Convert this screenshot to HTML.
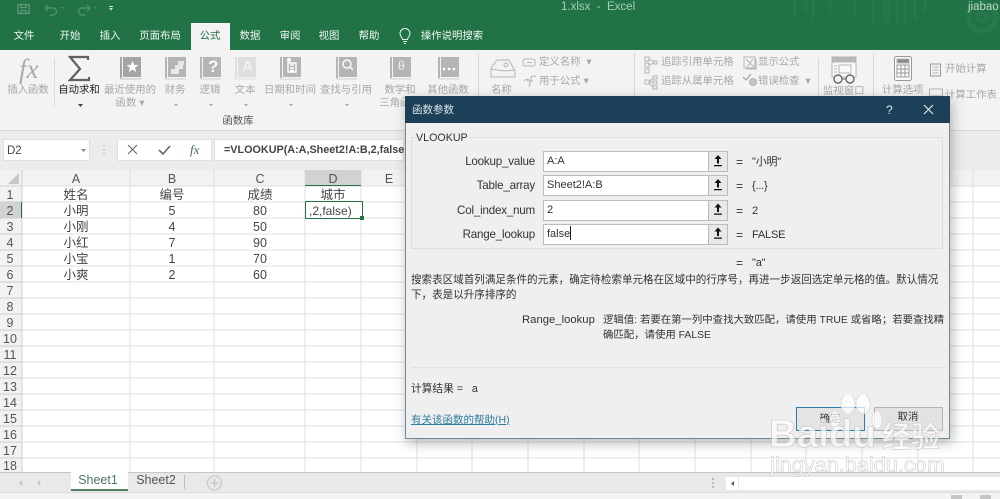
<!DOCTYPE html>
<html><head><meta charset="utf-8"><style>
html,body{margin:0;padding:0;width:1000px;height:499px;overflow:hidden;background:#fff}
#r{position:relative;width:1000px;height:499px;overflow:hidden;font-family:"Liberation Sans","Noto Sans CJK SC",sans-serif;font-size:10.4px;color:#333;filter:blur(.3px)}
#r div{position:absolute}
.t{white-space:nowrap;line-height:14px}
.c{transform:translateX(-50%)}
.w{color:#f0f5f2}
.g{color:#a8a8a8}
.cell{font-size:12.5px;color:#444;line-height:16px;transform:translateX(-50%);white-space:nowrap}
.rn{left:0;width:20px;text-align:center;font-size:12.5px;line-height:16px;color:#555}
.lb{right:465px;font-size:11.6px;letter-spacing:-.2px;color:#333;white-space:nowrap;line-height:16px}
.inp{left:543px;height:19px;background:#fff;border:1px solid #bcbcbc;font-size:11px;line-height:19px;padding-left:3px;width:161px;color:#333}
.btn{left:708px;width:18px;height:19px;background:#e9e9e9;border:1px solid #bcbcbc}
.val{left:752px;font-size:11px;letter-spacing:-.2px;line-height:16px;white-space:nowrap;color:#333}
.eq{left:736px;font-size:12px;line-height:16px;color:#333}
.d{font-size:10.4px;line-height:15px;white-space:nowrap;color:#333}
</style></head><body><div id="r">

<!-- green title -->
<div style="left:0;top:0;width:1000px;height:50px;background:#217346"></div>
<svg style="position:absolute;left:0;top:0" width="1000" height="50" fill="none">
<g stroke="#5f9a79" stroke-width="1.3"><rect x="18" y="4.500" width="11" height="9"/><path d="M21 13.500v-3h5v3M21 4.500v3h5v-3"/></g>
<g stroke="#4f8f6b" stroke-width="1.400"><path d="M45 8h8a3.500 3.500 0 0 1 0 7h-3M45 8l3-3M45 8l3 3"/><path d="M90 8h-8a3.500 3.500 0 0 0 0 7h3M90 8l-3-3M90 8l-3 3"/></g>
<path d="M61 7h3l-1.500 2zM94 7h3l-1.500 2z" fill="#4f8f6b"/>
<path d="M109 6h4v1h-4zM109 8h4l-2 2.500z" fill="#cfe0d6"/>
<g stroke="#2b7a4e" stroke-width="3" opacity=".55"><path d="M795 0v18M806 0v12M813 0v21M830 0v14M855 0v18M873 0v25M884 0v20M888 0v26M897 0v22M905 0v25M915 0v20M925 0v12"/></g>
<circle cx="982" cy="17" r="14" stroke="#2b7a4e" stroke-width="5" opacity=".7"/><circle cx="982" cy="17" r="4" stroke="#2b7a4e" stroke-width="3" opacity=".7"/>
</svg>
<div class="t" style="left:561px;top:0;color:#a9cdb8;font-size:11.5px">1.xlsx&nbsp; -&nbsp; Excel</div>
<div class="t" style="left:968px;top:0;color:#bcd8c8;font-size:11.5px">jiabao</div>

<!-- tabs -->
<div style="left:191px;top:23px;width:39px;height:27px;background:#f3f3f3"></div>
<div class="t c w" style="left:24px;top:30px">文件</div>
<div class="t c w" style="left:70px;top:30px">开始</div>
<div class="t c w" style="left:110px;top:30px">插入</div>
<div class="t c w" style="left:160px;top:30px">页面布局</div>
<div class="t c" style="left:210px;top:30px;color:#217346">公式</div>
<div class="t c w" style="left:250px;top:30px">数据</div>
<div class="t c w" style="left:290px;top:30px">审阅</div>
<div class="t c w" style="left:329px;top:30px">视图</div>
<div class="t c w" style="left:369px;top:30px">帮助</div>
<div class="t c w" style="left:452px;top:30px">操作说明搜索</div>
<svg style="position:absolute;left:398px;top:28px" width="14" height="17" fill="none" stroke="#e8f1ec" stroke-width="1"><path d="M4.500 11.500C4.500 9.500 2 8.500 2 5.500a5 5 0 0 1 10 0c0 3-2.500 4-2.500 6zM5 13.500h4M6 15.500h2"/></svg>

<!-- ribbon -->
<div style="left:0;top:50px;width:1000px;height:81px;background:#f3f3f3"></div>
<div style="left:0;top:130px;width:1000px;height:40px;background:#ececec;border-top:1px solid #d6d6d6"></div>
<div style="left:54px;top:58px;width:1px;height:50px;background:#dcdcdc"></div>
<div style="left:478px;top:53px;width:1px;height:45px;background:#d8d8d8"></div>
<div style="left:634px;top:53px;width:1px;height:45px;background:#d8d8d8"></div>
<div style="left:818px;top:58px;width:1px;height:40px;background:#d8d8d8"></div>
<div style="left:873px;top:53px;width:1px;height:45px;background:#d8d8d8"></div>

<div style="left:19px;top:49px;font:italic 27px/40px 'Liberation Serif',serif;color:#ababab">fx</div>
<svg style="position:absolute;left:0;top:50px" width="1000" height="50" fill="none">
<path d="M88 10V7H70l10 12-10 11h19v-3" stroke="#606060" stroke-width="2.200"/>
<path d="M120 7h2v21h-2zM123 7h18v20h-18z" fill="#a5a5a5"/><path d="M120 29h21" stroke="#c2c2c2"/>
<path d="M165 7h2v21h-2zM168 7h18v20h-18z" fill="#b5b5b5"/><path d="M165 29h21" stroke="#d0d0d0"/>
<path d="M200 7h2v21h-2zM203 7h18v20h-18z" fill="#b5b5b5"/><path d="M200 29h21" stroke="#d0d0d0"/>
<path d="M235 7h2v21h-2zM238 7h18v20h-18z" fill="#dedede"/><path d="M235 29h21" stroke="#e0e0e0"/>
<path d="M280 7h2v21h-2zM283 7h18v20h-18z" fill="#b5b5b5"/><path d="M280 29h21" stroke="#d0d0d0"/>
<path d="M336 7h2v21h-2zM339 7h18v20h-18z" fill="#b5b5b5"/><path d="M336 29h21" stroke="#d0d0d0"/>
<path d="M390 7h2v21h-2zM393 7h18v20h-18z" fill="#b5b5b5"/><path d="M390 29h21" stroke="#d0d0d0"/>
<path d="M438 7h2v21h-2zM441 7h18v20h-18z" fill="#b5b5b5"/><path d="M438 29h21" stroke="#d0d0d0"/>
<path d="M132.500 11l1.800 4h4.200l-3.400 2.800 1.200 4.300-3.800-2.500-3.800 2.500 1.200-4.300-3.400-2.800h4.200z" fill="#fff"/>
<path d="M171 19h8v5h-8zM175 15h8v4h-8zM178 11h6v4h-6z" fill="#e8e8e8"/>
<path d="M296 22v-9h-8v9zM290 15h4M290 18h4M290 20.500h4" stroke="#fff" stroke-width="1.400"/><circle cx="289" cy="10" r="2" fill="#fff"/>
<circle cx="347" cy="14" r="4" stroke="#fff" stroke-width="1.400"/><path d="M350 17l3 3" stroke="#fff" stroke-width="1.500"/>
<circle cx="444" cy="19" r="1.300" fill="#fff"/><circle cx="449" cy="19" r="1.300" fill="#fff"/><circle cx="454" cy="19" r="1.300" fill="#fff"/>
</svg>
<div class="t" style="left:208px;top:54px;font:bold 17px/26px 'Liberation Sans',sans-serif;color:#fff;opacity:.95">?</div>
<div class="t" style="left:242px;top:54px;font:bold 15px/26px 'Liberation Sans',sans-serif;color:#f2f2f2">A</div>
<div class="t" style="left:398px;top:55px;font:14px/24px 'Liberation Serif',serif;color:#f0f0f0">θ</div>

<div class="t c g" style="left:28px;top:84px">插入函数</div>
<div class="t c" style="left:79px;top:84px;color:#222">自动求和</div>
<div class="t c g" style="left:130px;top:84px">最近使用的</div>
<div class="t c g" style="left:130px;top:97px">函数 ▾</div>
<div class="t c g" style="left:175px;top:84px">财务</div>
<div class="t c g" style="left:210px;top:84px">逻辑</div>
<div class="t c g" style="left:245px;top:84px">文本</div>
<div class="t c g" style="left:290px;top:84px">日期和时间</div>
<div class="t c g" style="left:346px;top:84px">查找与引用</div>
<div class="t c g" style="left:400px;top:84px">数学和</div>
<div class="t c g" style="left:400px;top:97px">三角函数</div>
<div class="t c g" style="left:448px;top:84px">其他函数</div>
<svg style="position:absolute;left:0;top:100px" width="400" height="10"><path d="M78 4h5l-2.500 3z" fill="#444"/><path d="M174 4h4l-2 2.500zM209 4h4l-2 2.500zM244 4h4l-2 2.500zM289 4h4l-2 2.500zM345 4h4l-2 2.500z" fill="#aaa"/></svg>
<div class="t c" style="left:238px;top:115px;color:#555">函数库</div>

<div class="t g" style="left:491px;top:84px">名称</div>
<div class="t g" style="left:539px;top:56px">定义名称 &nbsp;▾</div>
<div class="t g" style="left:539px;top:75px">用于公式 ▾</div>
<div class="t g" style="left:661px;top:56px">追踪引用单元格</div>
<div class="t g" style="left:661px;top:75px">追踪从属单元格</div>
<div class="t g" style="left:758px;top:56px">显示公式</div>
<div class="t g" style="left:758px;top:75px">错误检查 &nbsp;▾</div>
<div class="t g" style="left:823px;top:85px">监视窗口</div>
<div class="t g" style="left:882px;top:84px">计算选项</div>
<div class="t g" style="left:945px;top:63px">开始计算</div>
<div class="t g" style="left:945px;top:89px">计算工作表</div>
<svg style="position:absolute;left:0;top:50px" width="1000" height="46" fill="none" stroke="#b4b4b4">
<path d="M497 10l-6 8v9h24v-6l-6-11z"/><path d="M491 19l14 2 10-1"/><circle cx="506" cy="15" r="2"/>
<rect x="523" y="9" width="12" height="7" rx="2"/><path d="M527 12.500h5"/>
<path d="M524 31c2-2 3-2 5-1M536 27c-3-2-5-1-5 2l-2 8M527 31h6"/>
<rect x="645" y="7" width="4" height="4"/><rect x="645" y="13" width="4" height="4"/><rect x="645" y="19" width="4" height="4"/><rect x="654" y="11" width="3" height="3"/><path d="M649 9l5 3M649 15l5-2"/>
<rect x="645" y="30" width="4" height="4"/><rect x="653" y="26" width="4" height="3"/><rect x="653" y="31" width="4" height="3"/><rect x="653" y="36" width="4" height="3"/><path d="M649 32l4-4M649 32h4M649 33l4 4"/>
<rect x="744" y="7" width="11" height="11"/><path d="M746 9l8 8M753 9l-6 8M746 19h10v-10"/>
<path d="M743 27l3 3 5-6" stroke="#999"/><circle cx="753" cy="32" r="3.500" fill="#c5c5c5"/>
<rect x="832" y="7" width="24" height="20" fill="#fafafa"/><rect x="832" y="7" width="24" height="5" fill="#b8b8b8"/><rect x="839" y="15" width="12" height="8"/><path d="M834 16h3M834 19h3M834 22h3"/>
<circle cx="838" cy="29" r="4" stroke="#666" stroke-width="1.400" fill="#f3f3f3"/><circle cx="850" cy="29" r="4" stroke="#666" stroke-width="1.400" fill="#f3f3f3"/><path d="M842 29h4" stroke="#666"/>
<rect x="894.500" y="6.500" width="17" height="24" rx="2" fill="#fafafa" stroke="#999"/><rect x="897" y="9" width="12" height="4" fill="#888"/><path d="M897 15h12v12h-12zM901 15v12M905 15v12M897 19h12M897 23h12" stroke="#999"/>
<rect x="930.500" y="14" width="10" height="12" stroke="#999"/><path d="M932.500 17h6M932.500 20h6M932.500 23h6"/>
<rect x="929.500" y="39" width="13" height="7"/>
</svg>

<!-- formula bar -->
<div style="left:3px;top:139px;width:87px;height:22px;background:#fff;border:1px solid #e0e0e0;box-sizing:border-box"></div>
<div class="t" style="left:7px;top:144px;font-size:11.5px;color:#444">D2</div>
<svg style="position:absolute;left:80px;top:148px" width="8" height="5"><path d="M1 1h5L3.500 4z" fill="#888"/></svg>
<div style="left:117px;top:139px;width:95px;height:22px;background:#fff;border:1px solid #e0e0e0;box-sizing:border-box"></div>
<div style="left:214px;top:139px;width:190px;height:22px;background:#fff;border:1px solid #e0e0e0;box-sizing:border-box"></div>
<svg style="position:absolute;left:100px;top:139px" width="112" height="22" fill="none"><path d="M4 6v1M4 10v1M4 14v1" stroke="#aaa" stroke-width="1.500"/><path d="M28 6l9 9M37 6l-9 9" stroke="#666" stroke-width="1.100"/><path d="M59 11l4 4 7-8" stroke="#666" stroke-width="1.600"/></svg>
<div class="t" style="left:190px;top:142px;font:italic 13px/16px 'Liberation Serif',serif;color:#3f7a55">fx</div>
<div class="t" style="left:224px;top:143px;font-size:10.800px;font-weight:bold;color:#444">=VLOOKUP(A:A,Sheet2!A:B,2,false</div>

<!-- grid -->
<div style="left:0;top:170px;width:1000px;height:302px;background:#fff"></div>
<div style="left:0;top:170px;width:1000px;height:16px;background:#f2f2f2"></div>
<div style="left:0;top:170px;width:22px;height:302px;background:#f2f2f2"></div>
<svg style="position:absolute;left:0;top:170px" width="1000" height="302" shape-rendering="crispEdges">
<g stroke="#dfdfdf"><path d="M22 16H1000M22 32H1000M22 48H1000M22 64H1000M22 80H1000M22 96H1000M22 112H1000M22 128H1000M22 144H1000M22 160H1000M22 176H1000M22 192H1000M22 208H1000M22 224H1000M22 240H1000M22 256H1000M22 272H1000M22 288H1000"/>
<path d="M130 0V302M214 0V302M305 0V302M361 0V302M417 0V302M472 0V302M528 0V302M584 0V302M639 0V302M695 0V302M751 0V302M806 0V302M862 0V302M918 0V302M973 0V302"/></g>
<g stroke="#cfcfcf"><path d="M0 16H22M0 32H22M0 48H22M0 64H22M0 80H22M0 96H22M0 112H22M0 128H22M0 144H22M0 160H22M0 176H22M0 192H22M0 208H22M0 224H22M0 240H22M0 256H22M0 272H22M0 288H22M22 0V302"/></g>
<rect x="305" y="0" width="56" height="15" fill="#d2d2d2"/><path d="M305 15.500H361" stroke="#217346" stroke-width="1"/>
<rect x="0" y="32" width="22" height="16" fill="#d2d2d2"/><path d="M21.500 32V48" stroke="#217346"/>
<path d="M19 3v11H8z" fill="#c8c8c8" shape-rendering="auto"/>
</svg>
<div class="t c" style="left:76px;top:171px;font-size:12.5px;color:#555;line-height:16px">A</div>
<div class="t c" style="left:172px;top:171px;font-size:12.5px;color:#555;line-height:16px">B</div>
<div class="t c" style="left:260px;top:171px;font-size:12.5px;color:#555;line-height:16px">C</div>
<div class="t c" style="left:333px;top:171px;font-size:12.5px;color:#555;line-height:16px">D</div>
<div class="t c" style="left:389px;top:171px;font-size:12.5px;color:#555;line-height:16px">E</div>
<div class="rn" style="top:187px">1</div><div class="rn" style="top:203px">2</div><div class="rn" style="top:219px">3</div><div class="rn" style="top:235px">4</div><div class="rn" style="top:251px">5</div><div class="rn" style="top:267px">6</div><div class="rn" style="top:283px">7</div><div class="rn" style="top:299px">8</div><div class="rn" style="top:315px">9</div><div class="rn" style="top:331px">10</div><div class="rn" style="top:347px">11</div><div class="rn" style="top:363px">12</div><div class="rn" style="top:379px">13</div><div class="rn" style="top:395px">14</div><div class="rn" style="top:411px">15</div><div class="rn" style="top:427px">16</div><div class="rn" style="top:443px">17</div><div class="rn" style="top:458px">18</div>

<div class="cell" style="left:76px;top:187px">姓名</div><div class="cell" style="left:172px;top:187px">编号</div><div class="cell" style="left:260px;top:187px">成绩</div><div class="cell" style="left:333px;top:187px">城市</div>
<div class="cell" style="left:76px;top:203px">小明</div><div class="cell" style="left:172px;top:203px">5</div><div class="cell" style="left:260px;top:203px">80</div>
<div class="cell" style="left:76px;top:219px">小刚</div><div class="cell" style="left:172px;top:219px">4</div><div class="cell" style="left:260px;top:219px">50</div>
<div class="cell" style="left:76px;top:235px">小红</div><div class="cell" style="left:172px;top:235px">7</div><div class="cell" style="left:260px;top:235px">90</div>
<div class="cell" style="left:76px;top:251px">小宝</div><div class="cell" style="left:172px;top:251px">1</div><div class="cell" style="left:260px;top:251px">70</div>
<div class="cell" style="left:76px;top:267px">小爽</div><div class="cell" style="left:172px;top:267px">2</div><div class="cell" style="left:260px;top:267px">60</div>
<div style="left:304.500px;top:200.500px;width:58px;height:18px;border:1.500px solid #217346;box-sizing:border-box;background:#fff"></div>
<div style="left:360px;top:216px;width:4px;height:4px;background:#217346"></div>
<div class="t" style="left:309px;top:203.500px;font-size:12px;line-height:15px;color:#444">,2,false)</div>

<!-- tab bar -->
<div style="left:0;top:472px;width:1000px;height:20px;background:#e9e9e9;border-top:1px solid #c6c6c6;box-sizing:border-box"></div>
<div style="left:0;top:492px;width:1000px;height:7px;background:#f3f3f3;border-top:1px solid #dcdcdc;box-sizing:border-box"></div>
<div style="left:71px;top:472px;width:57px;height:18px;background:#fff"></div>
<div style="left:71px;top:488.500px;width:57px;height:2px;background:#4e8064"></div>
<div class="t c" style="left:98px;top:472px;font-size:12.500px;line-height:16px;color:#4b7a5e">Sheet1</div>
<div class="t c" style="left:156px;top:472px;font-size:12.500px;line-height:16px;color:#555">Sheet2</div>
<div style="left:184px;top:475px;width:1px;height:14px;background:#bdbdbd"></div>
<svg style="position:absolute;left:0;top:472px" width="240" height="20" fill="none"><path d="M22 8v6l-3-3zM38 8v6l3-3z" fill="#c5c5c5"/><circle cx="214.500" cy="11" r="7" stroke="#c8c8c8" stroke-width="1.200"/><path d="M214.500 7v8M210.500 11h8" stroke="#c0c0c0" stroke-width="1.200"/></svg>
<svg style="position:absolute;left:708px;top:475px" width="292" height="24"><path d="M5 3v2M5 7v2M5 11v2" stroke="#aaa" stroke-width="1.500"/><rect x="18" y="2" width="12" height="13" fill="#fff"/><path d="M26 6v5l-3-2.500z" fill="#555"/><rect x="31" y="2" width="261" height="13" fill="#fff"/><rect x="243" y="20" width="11" height="4" fill="#c5c5c5"/><rect x="272" y="20" width="11" height="4" fill="#c5c5c5"/></svg>

<!-- dialog -->
<div style="left:405px;top:96px;width:545px;height:343px;background:#efefef;border:1px solid #6f8a96;box-sizing:border-box;box-shadow:2px 4px 12px rgba(0,0,0,.28)"></div>
<div style="left:405px;top:96px;width:545px;height:27px;background:#1b4058"></div>
<div class="t" style="left:412px;top:103px;color:#dbe4ea;font-size:10.500px">函数参数</div>
<div class="t" style="left:886px;top:103px;color:#dbe4ea;font-size:12px">?</div>
<svg style="position:absolute;left:923px;top:104px" width="11" height="11" fill="none"><path d="M1 1l9 9M10 1l-9 9" stroke="#e6edf0" stroke-width="1.100"/></svg>

<div style="left:411px;top:137px;width:532px;height:112px;border:1px solid #dedede;box-sizing:border-box"></div>
<div class="t" style="left:416px;top:131px;font-size:10.700px;background:#efefef;padding-right:1px;color:#333">VLOOKUP</div>

<div class="lb" style="top:153.500px">Lookup_value</div>
<div class="lb" style="top:178px">Table_array</div>
<div class="lb" style="top:202.500px">Col_index_num</div>
<div class="lb" style="top:226.500px">Range_lookup</div>

<div class="inp" style="top:151px">A:A</div><div class="btn" style="top:151px"></div>
<div class="inp" style="top:175px">Sheet2!A:B</div><div class="btn" style="top:175px"></div>
<div class="inp" style="top:199.500px">2</div><div class="btn" style="top:199.500px"></div>
<div class="inp" style="top:223.500px">false<span style="display:inline-block;width:1px;height:14px;background:#222;vertical-align:-3px"></span></div><div class="btn" style="top:223.500px"></div>
<svg style="position:absolute;left:708px;top:151px" width="20" height="95" fill="#111"><path d="M10 4l3.500 4H11v4.500H9V8H6.500zM6 14h8v1.200H6z"/><path d="M10 28l3.500 4H11v4.500H9V32H6.500zM6 38h8v1.200H6z"/><path d="M10 52.500l3.500 4H11V61H9v-4.500H6.500zM6 62.500h8v1.200H6z"/><path d="M10 76.500l3.500 4H11V85H9v-4.500H6.500zM6 86.500h8v1.200H6z"/></svg>

<div class="eq" style="top:153.500px">=</div><div class="val" style="top:153.500px">"小明"</div>
<div class="eq" style="top:178px">=</div><div class="val" style="top:178px">{...}</div>
<div class="eq" style="top:202.500px">=</div><div class="val" style="top:202.500px">2</div>
<div class="eq" style="top:226.500px">=</div><div class="val" style="top:226.500px">FALSE</div>
<div class="eq" style="top:255px">=</div><div class="val" style="top:255px">"a"</div>

<div class="d" style="left:411px;top:272.500px;font-size:10.560px">搜索表区域首列满足条件的元素，确定待检索单元格在区域中的行序号，再进一步返回选定单元格的值。默认情况</div>
<div class="d" style="left:411px;top:287.500px;font-size:10.560px">下，表是以升序排序的</div>
<div class="d" style="left:522px;top:312.500px;font-size:11.300px">Range_lookup</div>
<div class="d" style="left:603px;top:312.500px">逻辑值: 若要在第一列中查找大致匹配，请使用 TRUE 或省略；若要查找精</div>
<div class="d" style="left:603px;top:327.500px">确匹配，请使用 FALSE</div>
<div style="left:411px;top:367px;width:532px;height:1px;background:#e0e0e0"></div>
<div class="d" style="left:411px;top:381.500px;font-size:10.700px">计算结果 =&nbsp;&nbsp; a</div>
<div class="d" style="left:411px;top:412.500px;font-size:10.500px;color:#2f7f9f;text-decoration:underline">有关该函数的帮助(H)</div>
<div style="left:796px;top:407px;width:69px;height:24px;background:#e4e4e4;border:1.500px solid #2a7ea6;box-sizing:border-box"></div>
<div style="left:874px;top:407px;width:69px;height:24px;background:#e2e2e2;border:1px solid #b5b5b5;box-sizing:border-box"></div>
<div class="t c" style="left:830px;top:413px;color:#333">确定</div>
<div class="t c" style="left:908px;top:411px;color:#333">取消</div>

<!-- watermark -->
<svg style="position:absolute;left:760px;top:395px" width="240" height="100">
<g fill="rgba(255,255,255,.72)" stroke="#cfcfcf" stroke-width=".6"><ellipse cx="88" cy="9" rx="7" ry="10"/><ellipse cx="103" cy="9" rx="7" ry="10"/><ellipse cx="75" cy="25" rx="5" ry="9"/><ellipse cx="117" cy="25" rx="5" ry="9"/></g>
</svg>
<div class="t" style="left:769px;top:415px;font:bold 38.500px/40px 'Liberation Sans',sans-serif;color:rgba(255,255,255,.7);-webkit-text-stroke:.6px #c4c4c4">Baidu</div>
<div class="t" style="left:882px;top:416px;font:bold 29px/38px 'Noto Sans CJK SC',sans-serif;color:rgba(255,255,255,.7);-webkit-text-stroke:.5px #c4c4c4">经验</div>
<div class="t" style="left:770px;top:453px;font:21.700px/24px 'Liberation Sans',sans-serif;color:rgba(255,255,255,.75);-webkit-text-stroke:.5px #c4c4c4">jingyan.baidu.com</div>

</div></body></html>
